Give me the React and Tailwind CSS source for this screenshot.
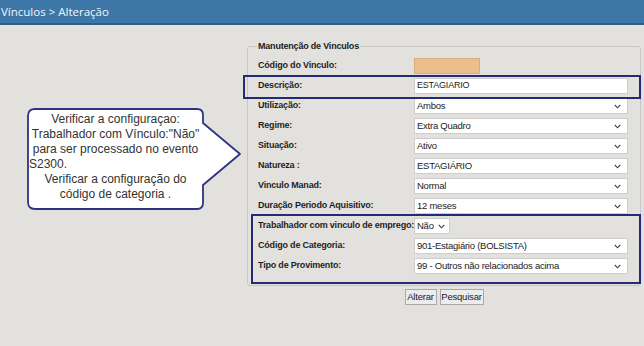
import React from 'react'

function Chevron(){
  return (
    <svg width="7" height="5" viewBox="0 0 7 5" className="shrink-0">
      <polyline points="0.8,1 3.5,3.8 6.2,1" fill="none" stroke="#444" strokeWidth="1.1" />
    </svg>
  )
}

function Select({value, w = 'w-[214px]', pr = 'pr-[6px]'}){
  return (
    <div className={`flex h-[16px] ${w} items-center justify-between border border-[#cdcdcd] bg-white pl-[2px] ${pr} text-[9.5px] tracking-[-0.25px] text-[#222]`}>
      <span className="whitespace-nowrap leading-none">{value}</span>
      <Chevron />
    </div>
  )
}

function Row({label, children}){
  return (
    <div className="flex h-[20px] items-center">
      <div className="w-[156px] shrink-0 whitespace-nowrap text-[9px] font-bold tracking-[-0.2px] text-[#1f1f1f]">{label}</div>
      {children}
    </div>
  )
}

const selects = [
  ['Utilização:', 'Ambos'],
  ['Regime:', 'Extra Quadro'],
  ['Situação:', 'Ativo'],
  ['Natureza :', 'ESTAGIÁRIO'],
  ['Vinculo Manad:', 'Normal'],
  ['Duração Periodo Aquisitivo:', '12 meses'],
]

export default function App(){
  return (
    <div className="relative min-h-screen bg-[#e3e1de] font-['Liberation_Sans',Arial,sans-serif]">
      <header className="h-[25px] border-b-2 border-[#2f5f88] bg-[#3c77a7] pl-px text-[11.5px] leading-[23px] text-[#f2f6fa] font-['Open_Sans',sans-serif]">
        Vínculos &gt; Alteração
      </header>

      <div className="pl-[247px] pt-[15px]">
        <fieldset className="w-[394px] rounded-[3px] border border-[#c6c6c6] pl-[10px] pr-[12px] pb-[9px] pt-[4px]">
          <legend className="ml-[-1px] px-px text-[9px] font-bold leading-[12px] tracking-[-0.2px] text-[#222]">Manutenção de Vinculos</legend>

          <Row label="Código do Vinculo:">
            <div className="h-[16px] w-[66px] border border-[#d7ad7a] bg-[#eabf8b]" />
          </Row>
          <Row label="Descrição:">
            <div className="flex h-[16px] w-[214px] items-center border border-[#cdcdcd] bg-white pl-[2px] text-[9px] tracking-[-0.2px] text-[#222]">ESTAGIARIO</div>
          </Row>
          {selects.map(([l, v]) => (
            <Row key={l} label={l}><Select value={v} /></Row>
          ))}
          <Row label="Trabalhador com vinculo de emprego:">
            <Select value="Não" w="w-[36px]" pr="pr-[4px]" />
          </Row>
          <Row label="Código de Categoria:"><Select value="901-Estagiário (BOLSISTA)" /></Row>
          <Row label="Tipo de Provimento:"><Select value="99 - Outros não relacionados acima" /></Row>
        </fieldset>

        <div className="mt-[3px] flex w-[394px] justify-center gap-[3px] text-[9.5px] tracking-[-0.2px] text-[#222]">
          <button className="h-[16px] w-[32px] border border-[#a9a9a9] bg-[#ececec] leading-none">Alterar</button>
          <button className="h-[16px] w-[44px] border border-[#a9a9a9] bg-[#ececec] leading-none">Pesquisar</button>
        </div>
      </div>

      {/* annotation boxes */}
      <div className="absolute left-[243px] top-[75px] h-[24px] w-[398px] border-2 border-[#242b74]" />
      <div className="absolute left-[251px] top-[214px] h-[70px] w-[390px] border-2 border-[#242b74]" />

      {/* callout */}
      <div className="absolute left-[27px] top-[108px] h-[103px] w-[216px]">
        <svg width="216" height="103" viewBox="0 0 216 103" className="absolute inset-0">
          <path d="M 8 1 H 170 Q 176 1 176 7 V 15 L 213 46 L 176 77 V 95 Q 176 101 170 101 H 8 Q 1 101 1 94 V 8 Q 1 1 8 1 Z" fill="#ffffff" stroke="#2c3382" strokeWidth="1.8" strokeLinejoin="round" />
        </svg>
        <div className="absolute left-0 top-[4px] w-[177px] text-center text-[12px] leading-[15px] text-[#333]">
          <div>Verificar a configuraçao:</div>
          <div className="whitespace-nowrap">Trabalhador com Vínculo:"Não"</div>
          <div className="whitespace-nowrap">para ser processado no evento</div>
          <div className="pl-[2px] text-left">S2300.</div>
          <div>Verificar a configuração do</div>
          <div>código de categoria .</div>
        </div>
      </div>
    </div>
  )
}
